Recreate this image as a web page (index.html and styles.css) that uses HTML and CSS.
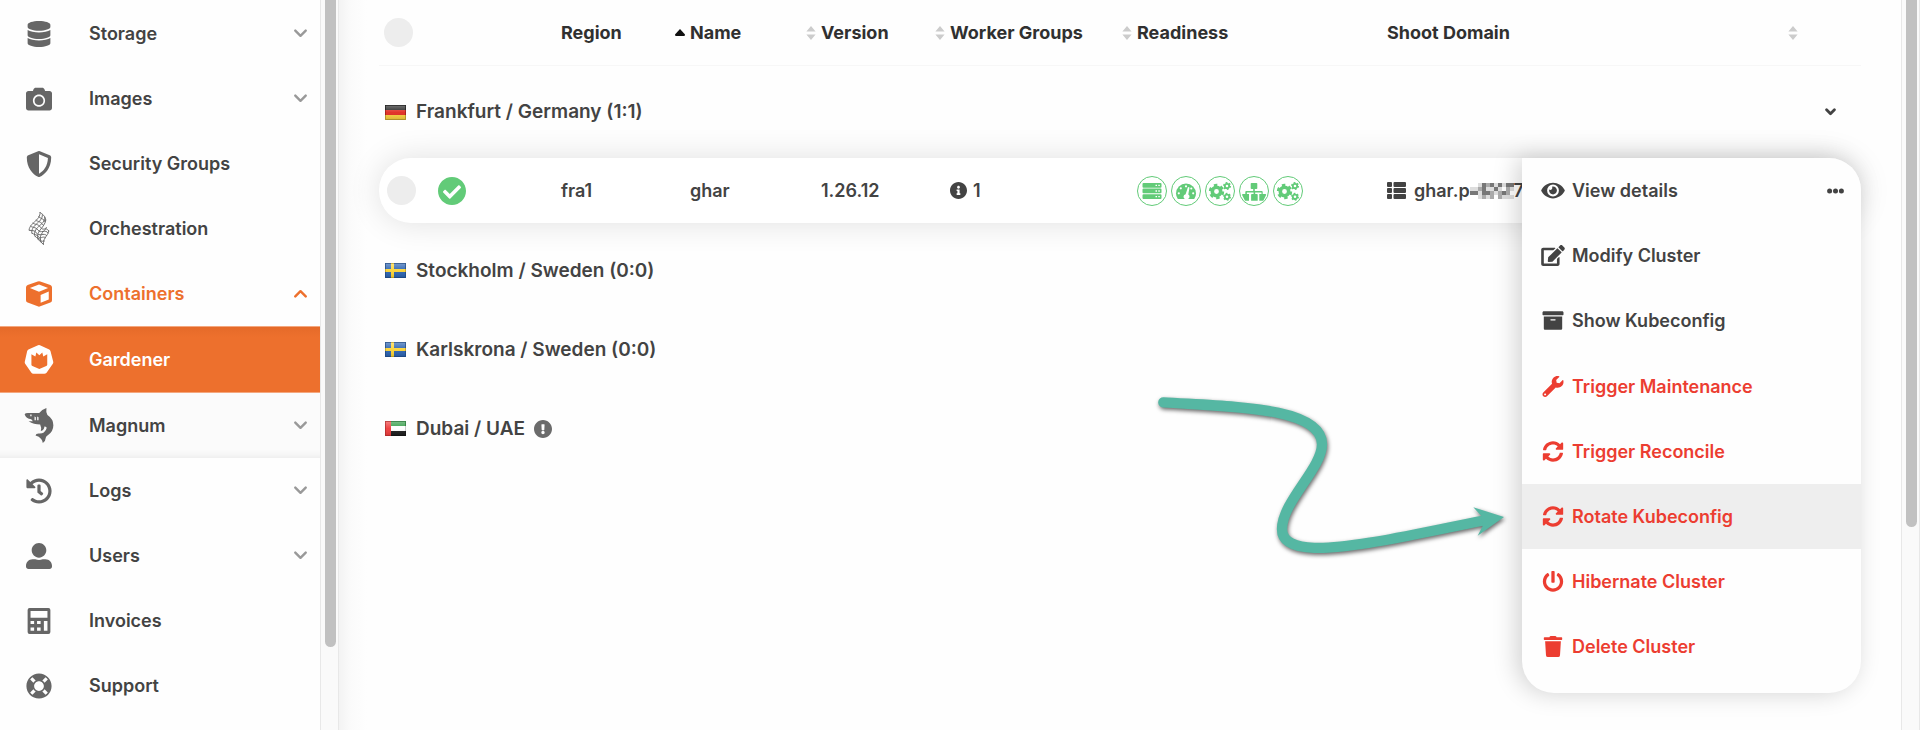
FILE: index.html
```html
<!DOCTYPE html>
<html lang="en">
<head>
<meta charset="utf-8">
<meta name="viewport" content="width=device-width, initial-scale=1">
<title>Gardener</title>
<link rel="stylesheet" href="styles.css">
</head>
<body>
<svg class="sprite" aria-hidden="true">
  <symbol id="database" viewBox="0 0 448 512"><path d="M448 73.143v45.714C448 159.143 347.667 192 224 192S0 159.143 0 118.857V73.143C0 32.857 100.333 0 224 0s224 32.857 224 73.143zM448 176v102.857C448 319.143 347.667 352 224 352S0 319.143 0 278.857V176c48.125 33.143 136.208 48.572 224 48.572S399.874 209.143 448 176zm0 160v102.857C448 479.143 347.667 512 224 512S0 479.143 0 438.857V336c48.125 33.143 136.208 48.572 224 48.572S399.874 369.143 448 336z"/></symbol>
  <symbol id="camera" viewBox="0 0 512 512"><path d="M512 144v288c0 26.5-21.5 48-48 48H48c-26.5 0-48-21.5-48-48V144c0-26.5 21.5-48 48-48h88l12.3-32.9c7-18.7 24.9-31.1 44.9-31.1h125.5c20 0 37.9 12.4 44.9 31.1L376 96h88c26.5 0 48 21.5 48 48zM376 288c0-66.2-53.8-120-120-120s-120 53.8-120 120 53.8 120 120 120 120-53.8 120-120zm-32 0c0 48.5-39.5 88-88 88s-88-39.5-88-88 39.5-88 88-88 88 39.5 88 88z"/></symbol>
  <symbol id="shield" viewBox="0 0 512 512"><path d="M466.5 83.7l-192-80a48.15 48.15 0 0 0-36.9 0l-192 80C27.7 91.1 16 108.6 16 128c0 198.5 114.5 335.7 221.5 380.3 11.8 4.9 25.1 4.9 36.9 0C360.1 472.6 496 349.3 496 128c0-19.4-11.7-36.9-29.5-44.3zM256.1 446.3l-.1-381 175.9 73.3c-3.3 151.4-82.1 261.1-175.8 307.7z"/></symbol>
  <symbol id="lattice" viewBox="0 0 62 98"><g fill="none" stroke="currentColor" stroke-width="2.8" stroke-linecap="round" stroke-linejoin="round"><path d="M34 1C36 12 26 22 17 30S0 48 2 54M41 8C42 20 32 28 23 36S7 54 10 63M48 15C49 28 39 35 30 43S14 62 19 72M51 24C50 35 43 42 37 50S23 68 28 81M53 46C50 54 42 58 38 66S34 80 37 89M60 56C60 64 53 70 49 77S44 88 44 96"/><path d="M34 1C40 6 51 12 51 24M30 14C35 20 46 19 49 29M22 25C29 29 36 28 43 38M13 33C20 39 28 34 36 46S50 42 60 56M6 42C13 48 20 43 28 54S50 50 58 62M2 54C10 57 17 52 24 63S46 60 54 70M10 63C16 68 26 66 30 74S42 70 50 76M19 72C24 79 32 76 36 84S44 82 47 86M28 81L44 96"/></g></symbol>
  <symbol id="cube" viewBox="0 0 80 80"><path fill-rule="evenodd" d="M36 1.5Q40 0 44 1.5L75 12.5Q80 14.5 80 20V59Q80 64 75 66.5L44 78Q40 80 36 78L5 66.5Q0 64 0 59V20Q0 14.5 5 12.5ZM40 11L12 21.5 40 33 68 21.5ZM45 43V67L70 57V32Z"/></symbol>
  <symbol id="gardener" viewBox="0 0 88 88"><path fill-rule="evenodd" d="M41 1Q44-1 47 1L75 14Q78 16 79 19L87 50Q88 54 86 57L67 84Q64 87 60 87H27Q23 87 21 84L2 57Q0 54 1 50L8 19Q9 16 12 14ZM21 28V60Q21 63 24 64L45 73 66 64Q69 63 69 60V28L57 35 54 23 45 31 36 23 33 35Z"/></symbol>
  <symbol id="shark" viewBox="0 0 87 106"><path fill-rule="evenodd" d="M0 19Q2 15 10 15L44 15Q52 4 66 0 64 11 69 21 87 33 87 52 87 70 71 82 65 86 64 90 64 99 55 106 54 99 50 94 44 85 33 83 34 77 42 77 52 78 58 74 66 67 67 60 63 55 60 56 59 67 49 70 52 60 47 50 28 50 12 40L25 40 20 34Q4 32 0 19ZM17 20V25H21V20ZM30 26V37H34V28ZM38 26V37H42V28Z"/></symbol>
  <symbol id="history" viewBox="0 0 512 512"><path d="M504 255.531c.253 136.64-111.18 248.372-247.82 248.468-59.015.042-113.223-20.53-155.822-54.911-11.077-8.94-11.905-25.541-1.839-35.607l11.267-11.267c8.609-8.609 22.353-9.551 31.891-1.984C173.062 425.135 212.781 440 256 440c101.705 0 184-82.311 184-184 0-101.705-82.311-184-184-184-48.814 0-93.149 18.969-126.068 49.932l50.754 50.754c10.08 10.08 2.941 27.314-11.313 27.314H24c-8.837 0-16-7.163-16-16V38.627c0-14.254 17.234-21.393 27.314-11.314l49.372 49.372C129.209 34.136 189.552 8 256 8c136.81 0 247.747 110.78 248 247.531zm-180.912 78.784l9.823-12.63c8.138-10.463 6.253-25.542-4.21-33.679L288 256.349V152c0-13.255-10.745-24-24-24h-16c-13.255 0-24 10.745-24 24v135.651l65.409 50.874c10.463 8.137 25.541 6.253 33.679-4.21z"/></symbol>
  <symbol id="user" viewBox="0 0 512 512"><path d="M256 288c79.5 0 144-64.5 144-144S335.5 0 256 0 112 64.5 112 144s64.5 144 144 144zm128 32h-55.1c-22.2 10.2-46.9 16-72.9 16s-50.6-5.8-72.9-16H128C57.3 320 0 377.3 0 448v16c0 26.5 21.5 48 48 48h416c26.5 0 48-21.5 48-48v-16c0-70.7-57.3-128-128-128z"/></symbol>
  <symbol id="calculator" viewBox="0 0 70 80"><path fill-rule="evenodd" d="M6 0H64Q70 0 70 6V74Q70 80 64 80H6Q0 80 0 74V6Q0 0 6 0ZM9 9V30H61V9ZM9 40V49H20V40ZM29 40V49H40V40ZM50 40V70H61V40ZM9 60V70H20V60ZM29 60V70H40V60Z"/></symbol>
  <symbol id="lifering" viewBox="0 0 512 512"><path d="M256 8C119.033 8 8 119.033 8 256s111.033 248 248 248 248-111.033 248-248S392.967 8 256 8zm173.696 119.559l-63.399 63.399c-10.987-18.559-26.67-34.252-45.255-45.255l63.399-63.399a218.396 218.396 0 0 1 45.255 45.255zM256 352c-53.019 0-96-42.981-96-96s42.981-96 96-96 96 42.981 96 96-42.981 96-96 96zM127.559 82.304l63.399 63.399c-18.559 10.987-34.252 26.67-45.255 45.255l-63.399-63.399a218.372 218.372 0 0 1 45.255-45.255zM82.304 384.441l63.399-63.399c10.987 18.559 26.67 34.252 45.255 45.255l-63.399 63.399a218.396 218.396 0 0 1-45.255-45.255zm302.137 45.255l-63.399-63.399c18.559-10.987 34.252-26.67 45.255-45.255l63.399 63.399a218.403 218.403 0 0 1-45.255 45.255z"/></symbol>
  <symbol id="chevron" viewBox="0 0 14 9"><path d="M1.4 1.4L7 7l5.600-5.600" fill="none" stroke="currentColor" stroke-width="2.6" stroke-linecap="round" stroke-linejoin="round"/></symbol>
  <symbol id="chevron-bold" viewBox="0 0 11 8"><path d="M1.600 1.800L5.500 5.700l3.900-3.900" fill="none" stroke="currentColor" stroke-width="2.800" stroke-linecap="round" stroke-linejoin="round"/></symbol>
  <symbol id="eye" viewBox="0 0 576 512"><path d="M572.52 241.4C518.29 135.59 410.93 64 288 64S57.68 135.64 3.48 241.41a32.35 32.35 0 0 0 0 29.19C57.71 376.41 165.07 448 288 448s230.32-71.64 284.52-177.41a32.35 32.35 0 0 0 0-29.19zM288 400a144 144 0 1 1 144-144 143.93 143.93 0 0 1-144 144zm0-240a95.31 95.31 0 0 0-25.31 3.79 47.85 47.85 0 0 1-66.9 66.9A95.78 95.78 0 1 0 288 160z"/></symbol>
  <symbol id="edit" viewBox="0 0 576 512"><path d="M402.6 83.2l90.2 90.2c3.8 3.8 3.8 10 0 13.8L274.4 405.6l-92.8 10.3c-12.4 1.4-22.9-9.1-21.5-21.5l10.3-92.8L388.8 83.2c3.8-3.8 10-3.8 13.8 0zm162-22.9l-48.8-48.8c-15.2-15.2-39.9-15.2-55.2 0l-35.4 35.4c-3.8 3.8-3.8 10 0 13.8l90.2 90.2c3.8 3.8 10 3.8 13.8 0l35.4-35.4c15.2-15.3 15.2-40 0-55.2zM384 346.2V448H64V128h229.8c3.2 0 6.2-1.3 8.500-3.500l40-40c7.600-7.600 2.200-20.500-8.500-20.500H48C21.500 64 0 85.500 0 112v352c0 26.500 21.500 48 48 48h352c26.500 0 48-21.500 48-48V306.200c0-10.700-12.900-16-20.500-8.500l-40 40c-2.200 2.300-3.500 5.300-3.500 8.500z"/></symbol>
  <symbol id="archive" viewBox="0 0 512 512"><path d="M32 448c0 17.7 14.3 32 32 32h384c17.7 0 32-14.3 32-32V160H32v288zm160-212c0-6.6 5.4-12 12-12h104c6.6 0 12 5.4 12 12v8c0 6.6-5.4 12-12 12H204c-6.6 0-12-5.4-12-12v-8zM480 32H32C14.3 32 0 46.3 0 64v48c0 8.8 7.2 16 16 16h480c8.8 0 16-7.2 16-16V64c0-17.7-14.3-32-32-32z"/></symbol>
  <symbol id="wrench" viewBox="0 0 512 512"><path d="M507.73 109.1c-2.24-9.03-13.54-12.09-20.12-5.51l-74.36 74.36-67.88-11.31-11.31-67.88 74.36-74.36c6.62-6.62 3.43-17.9-5.66-20.16-47.38-11.74-99.55.91-136.58 37.93-39.64 39.64-50.55 97.1-34.05 147.2L18.74 402.76c-24.99 24.99-24.99 65.51 0 90.5 24.99 24.99 65.51 24.99 90.5 0l213.21-213.21c50.12 16.71 107.47 5.68 147.37-34.22 37.07-37.07 49.7-89.32 37.91-136.73zM64 472c-13.25 0-24-10.75-24-24 0-13.26 10.75-24 24-24s24 10.74 24 24c0 13.25-10.75 24-24 24z"/></symbol>
  <symbol id="sync" viewBox="0 0 512 512"><path d="M370.72 133.28C339.458 104.008 298.888 87.962 255.848 88c-77.458.068-144.328 53.178-162.791 126.85-1.344 5.363-6.122 9.15-11.651 9.15H24.103c-7.498 0-13.194-6.807-11.807-14.176C33.933 94.924 134.813 8 256 8c66.448 0 126.791 26.136 171.315 68.685L463.03 40.97C478.149 25.851 504 36.559 504 57.941V192c0 13.255-10.745 24-24 24H345.941c-21.382 0-32.09-25.851-16.971-40.971l41.75-41.749zM32 296h134.059c21.382 0 32.09 25.851 16.971 40.971l-41.75 41.75c31.262 29.273 71.835 45.319 114.876 45.28 77.418-.07 144.315-53.144 162.787-126.849 1.344-5.363 6.122-9.15 11.651-9.15h57.304c7.498 0 13.194 6.807 11.807 14.176C478.067 417.076 377.187 504 256 504c-66.448 0-126.791-26.136-171.315-68.685L48.97 471.03C33.851 486.149 8 475.441 8 454.059V320c0-13.255 10.745-24 24-24z"/></symbol>
  <symbol id="power" viewBox="0 0 512 512"><path d="M400 54.1c63 45 104 118.6 104 201.9 0 136.8-110.8 247.7-247.5 248C120 504.3 8.2 393 8 256.4 7.9 173.1 48.9 99.3 111.8 54.2c11.7-8.3 28-4.8 35 7.7L162.6 90c5.9 10.5 3.1 23.8-6.6 31-41.5 30.8-68 79.6-68 134.9-.1 92.3 74.5 168.1 168 168.1 91.6 0 168.6-74.2 168-169.1-.3-51.8-24.7-101.8-68.1-134-9.7-7.2-12.4-20.5-6.5-30.9l15.8-28.1c7-12.4 23.2-16.1 34.8-7.8zM296 264V24c0-13.3-10.7-24-24-24h-32c-13.3 0-24 10.7-24 24v240c0 13.3 10.7 24 24 24h32c13.3 0 24-10.7 24-24z"/></symbol>
  <symbol id="trash" viewBox="0 0 448 512"><path d="M432 32H312l-9.4-18.7A24 24 0 0 0 281.1 0H166.8a23.72 23.72 0 0 0-21.4 13.3L136 32H16A16 16 0 0 0 0 48v32a16 16 0 0 0 16 16h416a16 16 0 0 0 16-16V48a16 16 0 0 0-16-16zM32 128L53.2 467a48 48 0 0 0 47.9 45h245.8a48 48 0 0 0 47.9-45L416 128z"/></symbol>
  <symbol id="check" viewBox="8 8 496 496"><path d="M504 256c0 136.967-111.033 248-248 248S8 392.967 8 256 119.033 8 256 8s248 111.033 248 248zM227.314 387.314l184-184c6.248-6.248 6.248-16.379 0-22.627l-22.627-22.627c-6.248-6.249-16.379-6.249-22.628 0L216 308.118l-70.059-70.059c-6.248-6.248-16.379-6.248-22.628 0l-22.627 22.627c-6.248 6.248-6.248 16.379 0 22.627l104 104c6.249 6.249 16.379 6.249 22.628.001z"/></symbol>
  <symbol id="info" viewBox="8 8 496 496"><path d="M256 8C119.043 8 8 119.083 8 256c0 136.997 111.043 248 248 248s248-111.003 248-248C504 119.083 392.957 8 256 8zm0 110c23.196 0 42 18.804 42 42s-18.804 42-42 42-42-18.804-42-42 18.804-42 42-42zm56 254c0 6.627-5.373 12-12 12h-88c-6.627 0-12-5.373-12-12v-24c0-6.627 5.373-12 12-12h12v-64h-12c-6.627 0-12-5.373-12-12v-24c0-6.627 5.373-12 12-12h64c6.627 0 12 5.373 12 12v100h12c6.627 0 12 5.373 12 12v24z"/></symbol>
  <symbol id="warn" viewBox="8 8 496 496"><path d="M504 256c0 136.997-111.043 248-248 248S8 392.997 8 256C8 119.083 119.043 8 256 8s248 111.083 248 248zm-248 50c-25.405 0-46 20.595-46 46s20.595 46 46 46 46-20.595 46-46-20.595-46-46-46zm-43.673-165.346l7.418 136c.347 6.364 5.609 11.346 11.982 11.346h48.546c6.373 0 11.635-4.982 11.982-11.346l7.418-136c.375-6.874-5.098-12.654-11.982-12.654h-63.383c-6.884 0-12.356 5.78-11.981 12.654z"/></symbol>
  <symbol id="list" viewBox="0 0 19 17"><rect width="5" height="5" rx="1"/><rect x="6.5" width="12.5" height="5" rx="1"/><rect y="6" width="5" height="5" rx="1"/><rect x="6.5" y="6" width="12.5" height="5" rx="1"/><rect y="12" width="5" height="5" rx="1"/><rect x="6.5" y="12" width="12.5" height="5" rx="1"/></symbol>
  <symbol id="dots" viewBox="0 0 17 6"><circle cx="2.6" cy="3" r="2.5"/><circle cx="8.5" cy="3" r="2.5"/><circle cx="14.4" cy="3" r="2.5"/></symbol>
  <symbol id="sort" viewBox="0 0 10 14"><path d="M5 0l4.6 5.6H.4zM5 14l4.600-5.600H.4z"/></symbol>
  <symbol id="sortup" viewBox="0 0 10 14"><path d="M5 3l5 5.5Q10 10 9 10H1Q0 10 0 8.5z"/></symbol>
  <symbol id="server" viewBox="0 0 28 28"><path fill-rule="evenodd" d="M5.5 6h17q1 0 1 1v2.7q0 1-1 1h-17q-1 0-1-1V7q0-1 1-1zM17.5 7.7v1.4H19V7.7zM20.3 7.7v1.4h1.5V7.7zM5.5 11.6h17q1 0 1 1v2.7q0 1-1 1h-17q-1 0-1-1v-2.7q0-1 1-1zM17.5 13.3v1.4H19v-1.4zM20.3 13.3v1.4h1.5v-1.4zM5.5 17.2h17q1 0 1 1v2.7q0 1-1 1h-17q-1 0-1-1v-2.7q0-1 1-1zM17.5 18.900v1.400H19v-1.400zM20.300 18.900v1.400h1.500v-1.400z"/></symbol>
  <symbol id="gauge" viewBox="0 0 28 28"><path d="M5.8 22Q4 19.5 4 16.5a10 10 0 0 1 20 0q0 3-1.8 5.5z"/><g fill="#fff"><circle cx="14" cy="9.3" r="1.1"/><circle cx="8.8" cy="11.3" r="1.1"/><circle cx="6.8" cy="16.3" r="1.1"/><circle cx="21.2" cy="16.3" r="1.1"/><circle cx="19.3" cy="11.5" r="1.1"/><path d="M16 10l1.500.400-1.200 7a2.600 2.600 0 0 1-.300 4.600h-3.200a2.600 2.600 0 0 1 .800-4.800z"/></g></symbol>
  <symbol id="cogs" viewBox="0 0 28 28"><g fill="none" stroke="currentColor"><circle cx="10.5" cy="14.5" r="4.2" stroke-width="3.6"/><circle cx="10.5" cy="14.5" r="6.4" stroke-width="2.6" stroke-dasharray="3.4 3.3"/><circle cx="21" cy="9" r="2.2" stroke-width="1.8"/><circle cx="21" cy="9" r="3.3" stroke-width="1.4" stroke-dasharray="1.75 1.7"/><circle cx="21" cy="19.8" r="2.2" stroke-width="1.8"/><circle cx="21" cy="19.8" r="3.3" stroke-width="1.4" stroke-dasharray="1.75 1.7"/></g></symbol>
  <symbol id="sitemap" viewBox="0 0 28 28"><path d="M11.5 6h5q.8 0 .8.8v4.4q0 .8-.8.8h-1.7v2h7q.9 0 .9.9V17h2.500q1.200 0 .900 1l-2.800 5.800h-4V17h2.200v-1.400h-6.300V17h1.700q.8 0 .8.8v6h-6.600v-6q0-.8.8-.8h1.700v-1.400H6.900V17H9v6.800H5L2.100 18q-.300-1 .900-1h2.300v-2.100q0-.9.900-.9h7v-2h-1.700q-.8 0-.8-.8V6.800q0-.8.8-.8z"/></symbol>
  <linearGradient id="gloss" x1="0" y1="0" x2="0" y2="1"><stop offset="0" stop-color="#fff" stop-opacity=".35"/><stop offset=".5" stop-color="#fff" stop-opacity=".05"/><stop offset="1" stop-color="#000" stop-opacity=".12"/></linearGradient>
  <symbol id="de" viewBox="0 0 21 15"><path fill="#222" d="M0 0h21v5H0z"/><path fill="#e02a20" d="M0 5h21v5H0z"/><path fill="#f7ce3c" d="M0 10h21v5H0z"/><path fill="url(#gloss)" stroke="#000" stroke-opacity=".25" d="M.5.5h20v14H.5z"/></symbol>
  <symbol id="se" viewBox="0 0 21 15"><path fill="#2a62b0" d="M0 0h21v15H0z"/><path fill="#fbd334" d="M6 0h3v15H6zM0 6h21v3H0z"/><path fill="url(#gloss)" stroke="#000" stroke-opacity=".2" d="M.5.5h20v14H.5z"/></symbol>
  <symbol id="ae" viewBox="0 0 21 15"><path fill="#319b45" d="M0 0h21v5H0z"/><path fill="#fff" d="M0 5h21v5H0z"/><path fill="#1c1c1c" d="M0 10h21v5H0z"/><path fill="#ee3b3b" d="M0 0h6v15H0z"/><path fill="url(#gloss)" stroke="#000" stroke-opacity=".2" d="M.5.5h20v14H.5z"/></symbol>
</svg>

<div class="app">
  <nav class="sidebar" aria-label="Main">
    <ul class="nav">
      <li><a class="nav-link" href="#"><svg class="nav-icon"><use href="#database"/></svg><span class="nav-text">Storage</span><svg class="nav-chevron"><use href="#chevron"/></svg></a></li>
      <li><a class="nav-link" href="#"><svg class="nav-icon"><use href="#camera"/></svg><span class="nav-text">Images</span><svg class="nav-chevron"><use href="#chevron"/></svg></a></li>
      <li><a class="nav-link" href="#"><svg class="nav-icon"><use href="#shield"/></svg><span class="nav-text">Security Groups</span></a></li>
      <li><a class="nav-link" href="#"><svg class="nav-icon nav-icon-tall"><use href="#lattice"/></svg><span class="nav-text">Orchestration</span></a></li>
      <li>
        <a class="nav-link nav-open" href="#" aria-expanded="true"><svg class="nav-icon"><use href="#cube"/></svg><span class="nav-text">Containers</span><svg class="nav-chevron"><use href="#chevron"/></svg></a>
        <ul class="subnav">
          <li><a class="nav-link nav-active" href="#" aria-current="page"><svg class="nav-icon nav-icon-large"><use href="#gardener"/></svg><span class="nav-text">Gardener</span></a></li>
          <li><a class="nav-link" href="#"><svg class="nav-icon nav-icon-shark"><use href="#shark"/></svg><span class="nav-text">Magnum</span><svg class="nav-chevron"><use href="#chevron"/></svg></a></li>
        </ul>
      </li>
      <li><a class="nav-link" href="#"><svg class="nav-icon"><use href="#history"/></svg><span class="nav-text">Logs</span><svg class="nav-chevron"><use href="#chevron"/></svg></a></li>
      <li><a class="nav-link" href="#"><svg class="nav-icon"><use href="#user"/></svg><span class="nav-text">Users</span><svg class="nav-chevron"><use href="#chevron"/></svg></a></li>
      <li><a class="nav-link" href="#"><svg class="nav-icon"><use href="#calculator"/></svg><span class="nav-text">Invoices</span></a></li>
      <li><a class="nav-link" href="#"><svg class="nav-icon"><use href="#lifering"/></svg><span class="nav-text">Support</span></a></li>
    </ul>
  </nav>
  <div class="track" aria-hidden="true"><div class="thumb thumb-nav"></div></div>

  <main class="main">
    <table class="clusters">
      <thead>
        <tr class="row head">
          <th class="cell-select"><input class="pick" type="checkbox" aria-label="Select all clusters"></th>
          <th></th>
          <th>Region</th>
          <th><button class="sort" type="button"><svg class="sort-icon sort-icon-on"><use href="#sortup"/></svg>Name</button></th>
          <th><button class="sort" type="button"><svg class="sort-icon"><use href="#sort"/></svg>Version</button></th>
          <th><button class="sort" type="button"><svg class="sort-icon"><use href="#sort"/></svg>Worker Groups</button></th>
          <th><button class="sort" type="button"><svg class="sort-icon"><use href="#sort"/></svg>Readiness</button></th>
          <th>Shoot Domain</th>
          <th><button class="sort" type="button" aria-label="Sort by status"><svg class="sort-icon"><use href="#sort"/></svg></button></th>
        </tr>
      </thead>
      <tbody>
        <tr class="group group-first">
          <td><svg class="flag"><use href="#de"/></svg>Frankfurt / Germany (1:1)<button class="fold" type="button" aria-label="Collapse group"><svg class="fold-icon"><use href="#chevron-bold"/></svg></button></td>
        </tr>
        <tr class="row cluster">
          <td class="cell-select"><input class="pick" type="checkbox" aria-label="Select ghar"></td>
          <td><svg class="status"><use href="#check"/></svg></td>
          <td>fra1</td>
          <td class="cell-indent">ghar</td>
          <td class="cell-indent">1.26.12</td>
          <td class="cell-indent"><svg class="info"><use href="#info"/></svg>1</td>
          <td class="cell-indent cell-health">
            <svg class="health"><use href="#server"/></svg>
            <svg class="health"><use href="#gauge"/></svg>
            <svg class="health"><use href="#cogs"/></svg>
            <svg class="health"><use href="#sitemap"/></svg>
            <svg class="health"><use href="#cogs"/></svg>
          </td>
          <td><svg class="list"><use href="#list"/></svg><span>ghar.p</span><svg class="mosaic" viewBox="0 0 11 4" preserveAspectRatio="none" shape-rendering="crispEdges"><path fill="#ddd" d="M0 0h11v4H0z"/><path fill="#777" d="M0 2h2v1H0zM3 0h1v3H3zM5 0h1v1H5zM7 0h1v1H7zM6 1h1v1H6zM9 0h2v1H9zM4 2h1v1H4zM8 2h1v1H8z"/><path fill="#aaa" d="M2 1h1v1H2zM4 0h1v1H4zM7 2h1v2H7zM9 2h1v1H9zM5 2h1v1H5zM3 3h1v1H3zM9 1h1v1H9zM5 3h1v1H5z"/><path fill="#fff" d="M0 0h2v1H0zM0 3h2v1H0zM6 3h1v1H6zM10 2h1v1h-1zM8 1h1v1H8z"/></svg><span>7</span></td>
          <td class="cell-actions">
            <button class="more" type="button" aria-label="Actions" aria-expanded="true"><svg class="more-icon"><use href="#dots"/></svg></button>
            <div class="menu">
              <button class="item" type="button"><svg class="item-icon"><use href="#eye"/></svg>View details</button>
              <button class="item" type="button"><svg class="item-icon"><use href="#edit"/></svg>Modify Cluster</button>
              <button class="item" type="button"><svg class="item-icon"><use href="#archive"/></svg>Show Kubeconfig</button>
              <div class="danger">
                <button class="item" type="button"><svg class="item-icon"><use href="#wrench"/></svg>Trigger Maintenance</button>
                <button class="item" type="button"><svg class="item-icon"><use href="#sync"/></svg>Trigger Reconcile</button>
                <button class="item item-hover" type="button"><svg class="item-icon"><use href="#sync"/></svg>Rotate Kubeconfig</button>
                <button class="item" type="button"><svg class="item-icon"><use href="#power"/></svg>Hibernate Cluster</button>
                <button class="item" type="button"><svg class="item-icon"><use href="#trash"/></svg>Delete Cluster</button>
              </div>
              <svg class="pointer" viewBox="0 0 1170 600" aria-hidden="true">
                <path d="M130 67C330 80 606 80 606 193C606 265 486 365 486 448C486 528 655 503 750 488S960 447 1100 420" fill="none" stroke="#55b7a3" stroke-width="31" stroke-linecap="round"/>
                <path d="M1060 382L1152 411 1073 467 1088 438 1084 408Z" fill="#55b7a3"/>
              </svg>
            </div>
          </td>
        </tr>
        <tr class="group group-next"><td><svg class="flag"><use href="#se"/></svg>Stockholm / Sweden (0:0)</td></tr>
        <tr class="group"><td><svg class="flag"><use href="#se"/></svg>Karlskrona / Sweden (0:0)</td></tr>
        <tr class="group"><td><svg class="flag"><use href="#ae"/></svg>Dubai / UAE<svg class="warn"><use href="#warn"/></svg></td></tr>
      </tbody>
    </table>
  </main>
  <div class="track" aria-hidden="true"><div class="thumb thumb-page"></div></div>
</div>
</body>
</html>
```
FILE: styles.css
```css
* {
  box-sizing: border-box;
}

body {
  margin: 0;
  color: #434343;
  background: #fefefe;
  font: 600 18px/24px Inter, "Liberation Sans", sans-serif;
}

svg {
  display: block;
  flex: none;
  fill: currentColor;
}

button {
  padding: 0;
  border: 0;
  color: inherit;
  background: none;
  font: inherit;
  cursor: pointer;
}

.sprite {
  position: absolute;
  width: 0;
  height: 0;
}

.app {
  display: flex;
  height: 100vh;
  overflow: hidden;
}

/* Sidebar */
.sidebar {
  flex: 0 0 320px;
  padding-top: 1px;
  overflow: hidden;
  background: #fefefe;
}

.nav,
.subnav {
  margin: 0;
  padding: 0;
  list-style: none;
}

.nav-link {
  display: flex;
  align-items: center;
  height: 65px;
  padding: 0 13px 0 19px;
  color: inherit;
  text-decoration: none;
}

.nav-icon {
  width: 40px;
  height: 26px;
  color: #666;
}

.nav-icon-tall {
  height: 33px;
}

.nav-icon-large {
  height: 29px;
}

.nav-icon-shark {
  height: 35px;
}

.nav-text {
  flex: 1;
  margin-left: 30px;
}

.nav-chevron {
  width: 13px;
  height: 9px;
  color: #999;
}

.nav-open,
.nav-open .nav-icon,
.nav-open .nav-chevron {
  color: #ed702d;
}

.nav-open .nav-chevron {
  transform: scaleY(-1);
}

.subnav {
  background: #fbfbfb;
  box-shadow: inset 0 -10px 10px -10px rgba(0, 0, 0, .1);
}

.nav-active {
  height: 67px;
  border: solid #f4a77e;
  border-width: 1px 0;
  color: #fff;
  background: linear-gradient(#e56a29, #ed702d 10px);
}

.nav-active .nav-icon {
  color: #fff;
}

/* Scrollbars */
.track {
  flex: 0 0 19px;
  padding-left: 4px;
  border: solid #e8e8e8;
  border-width: 0 1px;
  background: #fafafa;
}

.thumb {
  width: 11px;
  background: #c1c1c1;
  border-radius: 0 0 6px 6px;
}

.thumb-nav {
  height: 647px;
}

.thumb-page {
  height: 527px;
}

/* Cluster table */
.main {
  flex: 1;
  min-width: 0;
  padding: 0 40px;
  background: linear-gradient(90deg, #f3f3f3, #fbfbfb 12px, #fefefe 28px);
}

.clusters,
.clusters thead,
.clusters tbody {
  display: block;
}

.clusters th,
.clusters td {
  display: flex;
  align-items: center;
  min-width: 0;
  padding: 0;
  text-align: left;
  white-space: nowrap;
}

.row {
  display: grid;
  grid-template-columns: 59fr 123fr 114fr 131fr 129fr 187fr 265fr 401fr 73fr;
}

.head {
  height: 66px;
  border-bottom: 1px solid #f7f7f7;
  color: #303030;
}

.clusters .cell-select {
  padding-left: 8px;
}

.clusters .head .cell-select {
  padding-left: 5px;
}

.pick {
  appearance: none;
  width: 29px;
  height: 29px;
  margin: 0;
  background: #ededed;
  border-radius: 50%;
}

.sort {
  display: flex;
  align-items: center;
  gap: 5px;
}

.sort-icon {
  width: 10px;
  height: 14px;
  color: #ccc;
}

.sort-icon-on {
  color: #111;
}

.group {
  display: block;
}

.clusters .group td {
  height: 79px;
  padding: 0 25px 0 6px;
  font-size: 19px;
}

.clusters .group-first td {
  height: 92px;
}

.group-next {
  margin-top: 8px;
}

.flag {
  width: 21px;
  height: 15px;
  margin-right: 10px;
}

.fold {
  margin-left: auto;
}

.fold-icon {
  width: 11px;
  height: 8px;
}

.warn {
  width: 18px;
  height: 18px;
  margin-left: 9px;
  color: #6b6b6b;
}

.cluster {
  position: relative;
  height: 65px;
  background: #fff;
  border-radius: 32px;
  box-shadow: 0 0 32px rgba(0, 0, 0, .12);
}

.clusters .cell-indent {
  padding-left: 15px;
}

.cell-health {
  gap: 4px;
}

.status {
  width: 28px;
  height: 28px;
  color: #62cb78;
}

.info {
  width: 17px;
  height: 17px;
  margin-right: 6px;
}

.health {
  width: 30px;
  height: 30px;
  border: 1px solid #62cb78;
  border-radius: 50%;
  color: #62cb78;
}

.list {
  width: 19px;
  height: 17px;
  margin-right: 8px;
}

.mosaic {
  width: 44px;
  height: 16px;
}

/* Action menu */
.more {
  position: absolute;
  top: 22px;
  right: 16px;
  z-index: 2;
  padding: 8px 1px;
}

.more-icon {
  width: 17px;
  height: 6px;
}

.menu {
  position: absolute;
  top: 0;
  right: 0;
  z-index: 1;
  width: 339px;
  padding-bottom: 14px;
  background: #fefefe;
  border-radius: 0 32px 32px 32px;
  box-shadow: -5px 0 24px rgba(0, 0, 0, .18);
}

.item {
  display: flex;
  align-items: center;
  gap: 7px;
  width: 100%;
  height: 65px;
  padding-left: 19px;
}

.item-icon {
  width: 24px;
  height: 21px;
}

.danger {
  padding-top: 1px;
  color: #ec3d31;
}

.item-hover {
  background: #eee;
}

.pointer {
  position: absolute;
  top: 222px;
  right: calc(100% + 12px);
  width: 390px;
  height: 200px;
  filter: drop-shadow(1px 2px 2px rgba(0, 0, 0, .6));
  pointer-events: none;
}
```
